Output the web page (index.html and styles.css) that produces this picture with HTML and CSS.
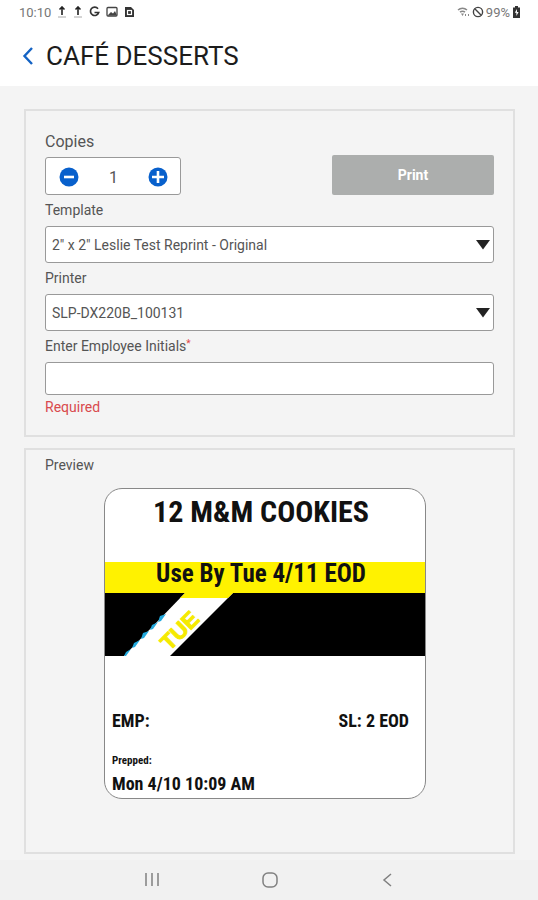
FILE: index.html
```
<!DOCTYPE html>
<html lang="en">
<head>
    <meta charset="UTF-8">
    <meta name="viewport" content="width=device-width, initial-scale=1.0">
    <title>Café Desserts</title>
    <link rel="stylesheet" href="styles.css">
</head>
<body>
    <div class="status-bar">
        <div class="status-group">
            <span class="status-time">10:10</span>
            <svg width="10" height="12" viewBox="0 0 10 12"><path d="M5 1v8M2.500 3.500L5 1l2.500 2.500" fill="none" stroke="#222" stroke-width="1.600"/><path d="M1 11h8" stroke="#aaa"/></svg>
            <svg width="10" height="12" viewBox="0 0 10 12"><path d="M5 1v8M2.500 3.500L5 1l2.500 2.500" fill="none" stroke="#222" stroke-width="1.600"/><path d="M1 11h8" stroke="#aaa"/></svg>
            <svg width="11" height="12" viewBox="0 0 11 12"><path d="M9 2.700A4.200 4.200 0 1 0 9.700 6.500H5.500" fill="none" stroke="#333" stroke-width="1.700"/></svg>
            <svg width="12" height="12" viewBox="0 0 12 12"><rect x="1" y="1.500" width="10" height="8.500" rx="1" fill="none" stroke="#444" stroke-width="1.300"/><path d="M2 9l3-3 2 1.500L9 5l2 4.500H2z" fill="#444"/></svg>
            <svg width="11" height="12" viewBox="0 0 11 12"><path d="M1 1h6l3 3v7H1z" fill="#333"/><rect x="3.500" y="4.500" width="4" height="4" fill="none" stroke="#fff" stroke-width="1.200"/></svg>
        </div>
        <div class="status-group status-right">
            <svg width="13" height="12" viewBox="0 0 13 12"><path d="M1 4a7 7 0 0 1 9 0M3 6.200a4 4 0 0 1 5 0" fill="none" stroke="#888" stroke-width="1.500"/><path d="M4 7.500h3L5.500 10zM8 8h1v2H8zM11 8h1v2h-1z" fill="#888"/></svg>
            <svg width="12" height="12" viewBox="0 0 12 12"><circle cx="6" cy="6" r="4.600" fill="none" stroke="#444" stroke-width="1.400"/><path d="M2.800 2.800l6.400 6.400" stroke="#444" stroke-width="1.400"/></svg>
            <span class="status-battery">99%</span>
            <svg width="9" height="12" viewBox="0 0 9 12"><path d="M3 0h3v1.500h2V12H1V1.500h2z" fill="#333"/><path d="M5 3L2.800 6.800h1.600V10l2.200-4H5z" fill="#fff"/></svg>
        </div>
    </div>

    <header class="header">
        <button class="back" aria-label="Back">
            <svg width="12" height="20" viewBox="0 0 12 20"><path d="M10 2L2.500 10l7.500 8" fill="none" stroke="#1463c4" stroke-width="2.400"/></svg>
        </button>
        <h1>CAFÉ DESSERTS</h1>
    </header>

    <main class="content">
        <form class="card form-card">
            <div class="top-row">
                <div>
                    <label class="field-label copies-label" for="copies">Copies</label>
                    <div class="stepper">
                        <button type="button" class="step" aria-label="Fewer copies">
                            <svg width="20" height="20" viewBox="0 0 20 20"><circle cx="10" cy="10" r="9.500" fill="#0860cc"/><path d="M5 10h10" stroke="#fff" stroke-width="2.600"/></svg>
                        </button>
                        <input type="text" id="copies" class="copies-input" value="1">
                        <button type="button" class="step" aria-label="More copies">
                            <svg width="20" height="20" viewBox="0 0 20 20"><circle cx="10" cy="10" r="9.500" fill="#0860cc"/><path d="M4 10h12M10 4v12" stroke="#fff" stroke-width="2.600"/></svg>
                        </button>
                    </div>
                </div>
                <button type="button" class="print">Print</button>
            </div>

            <label class="field-label" for="template">Template</label>
            <div class="select-box">
                <select id="template" class="field">
                    <option>2" x 2" Leslie Test Reprint - Original</option>
                </select>
                <svg class="arrow" width="14" height="10" viewBox="0 0 14 10"><path d="M0 0h14L7 9.500z" fill="#222"/></svg>
            </div>

            <label class="field-label" for="printer">Printer</label>
            <div class="select-box">
                <select id="printer" class="field">
                    <option>SLP-DX220B_100131</option>
                </select>
                <svg class="arrow" width="14" height="10" viewBox="0 0 14 10"><path d="M0 0h14L7 9.500z" fill="#222"/></svg>
            </div>

            <label class="field-label" for="initials">Enter Employee Initials<span class="star">*</span></label>
            <input type="text" id="initials" class="field initials">
            <p class="error">Required</p>
        </form>

        <section class="card preview-card">
            <h2 class="field-label">Preview</h2>
            <div class="sticker">
                <div class="sticker-title">12 M&amp;M COOKIES</div>
                <div class="use-by">Use By Tue 4/11 EOD</div>
                <div class="day-band">
                    <svg class="day-stripe" width="140" height="63" viewBox="0 0 140 63">
                        <path d="M80 0h48L65 63H19z" fill="#fff"/>
                        <path d="M80 0h48l-5 5H75z" fill="#fff200"/>
                        <path d="M61 21l-6 2-2 6 3-1zM53 29l-6 3-2 5 3-1zM44 38l-6 2-2 6 3-1zM35 47l-6 3-2 5 3-1zM26 56l-5 3-2 4h2z" fill="#22a9dd"/>
                        <text class="day-text" x="80" y="43" text-anchor="middle" transform="rotate(-45 80 43)">TUE</text>
                    </svg>
                </div>
                <div class="sticker-info">
                    <div class="info-row">
                        <span>EMP:</span>
                        <span>SL: 2 EOD</span>
                    </div>
                    <div class="prepped">Prepped:</div>
                    <div class="prepped-time">Mon 4/10 10:09 AM</div>
                </div>
            </div>
        </section>
    </main>

    <nav class="nav-bar">
        <button aria-label="Recent apps">
            <svg width="16" height="16" viewBox="0 0 16 16"><path d="M2 1v13M8 1v13M14 1v13" stroke="#808080" stroke-width="1.500"/></svg>
        </button>
        <button aria-label="Home">
            <svg width="16" height="16" viewBox="0 0 16 16"><rect x="1" y="1" width="14" height="14" rx="5" fill="none" stroke="#808080" stroke-width="1.500"/></svg>
        </button>
        <button aria-label="Back">
            <svg width="16" height="16" viewBox="0 0 16 16"><path d="M11 2L4 8l7 6" fill="none" stroke="#808080" stroke-width="1.500"/></svg>
        </button>
    </nav>
</body>
</html>
```
FILE: styles.css
```
* {
    box-sizing: border-box;
}

body {
    margin: 0;
    min-height: 100vh;
    display: flex;
    flex-direction: column;
    font-family: Roboto, "Liberation Sans", sans-serif;
    font-size: 14px;
    color: #555;
    background-color: #f4f4f4;
}

button {
    border: none;
    background: none;
    padding: 0;
    font-family: inherit;
    cursor: pointer;
}

svg {
    display: block;
}

/* Status bar */
.status-bar {
    display: flex;
    justify-content: space-between;
    height: 24px;
    padding: 0 17px 0 19px;
    background-color: #fff;
    color: #777;
    font-size: 13px;
}

.status-group {
    display: flex;
    align-items: center;
    gap: 6px;
}

.status-right {
    gap: 2px;
}

/* Header */
.header {
    display: flex;
    align-items: center;
    gap: 12px;
    height: 62px;
    padding: 2px 22px 0;
    background-color: #fff;
}

h1 {
    margin: 0;
    font-size: 26px;
    font-weight: 400;
    line-height: 32px;
    color: #1c1c1c;
}

/* Cards */
.content {
    flex: 1;
    display: flex;
    flex-direction: column;
    gap: 11px;
    padding: 23px 23px 6px 24px;
}

.card {
    border: 2px solid #e0e0e0;
    padding: 0 19px;
}

.form-card {
    padding-top: 16px;
    padding-bottom: 16px;
}

.top-row {
    display: flex;
    justify-content: space-between;
    align-items: flex-end;
}

.field-label {
    display: block;
    margin: 0;
    font-size: 14px;
    font-weight: 400;
    line-height: 31px;
    color: #555;
}

.copies-label {
    font-size: 16px;
    line-height: 30px;
}

.stepper {
    display: flex;
    align-items: center;
    justify-content: space-between;
    width: 136px;
    height: 38px;
    padding: 2px 12px 0 13px;
    border: 1px solid #999;
    border-radius: 3px;
    background-color: #fff;
}

.copies-input {
    width: 40px;
    border: none;
    padding: 0;
    text-align: center;
    font-family: inherit;
    font-size: 16px;
    color: #555;
}

.print {
    width: 162px;
    height: 40px;
    border-radius: 2px;
    background-color: #acaead;
    color: #fff;
    font-size: 14px;
    font-weight: 700;
}

.select-box {
    position: relative;
}

.field {
    display: block;
    width: 100%;
    height: 37px;
    padding: 0 6px;
    border: 1px solid #999;
    border-radius: 3px;
    background-color: #fff;
    font-family: inherit;
    font-size: 14px;
    color: #555;
    appearance: none;
}

.arrow {
    position: absolute;
    right: 4px;
    top: 14px;
    pointer-events: none;
}

.initials {
    height: 33px;
}

.star {
    color: #e04848;
    font-size: 10px;
    line-height: 10px;
    vertical-align: 4px;
}

.error {
    margin: 0;
    line-height: 24px;
    color: #d94a4d;
}

/* Sticker preview */
.preview-card {
    padding-bottom: 53px;
}

.sticker {
    max-width: 322px;
    margin: 7px 0 0 59px;
    border: 1px solid #888;
    border-radius: 18px;
    overflow: hidden;
    background-color: #fff;
    color: #111;
    font-family: "Liberation Sans Narrow", "Roboto Condensed", "Liberation Sans", sans-serif;
    font-weight: 700;
}

.sticker-title,
.use-by {
    padding-right: 8px;
    text-align: center;
}

.sticker-title {
    height: 73px;
    font-size: 30px;
    line-height: 46px;
}

.use-by {
    height: 31px;
    background-color: #fff200;
    font-size: 25px;
    line-height: 24px;
}

.day-band {
    height: 63px;
    background-color: #000;
}

.day-stripe {
    overflow: visible;
}

.day-text {
    fill: #f5ea00;
    stroke: #f5ea00;
    stroke-width: 1px;
    font-family: "Liberation Sans", sans-serif;
    font-size: 22px;
    font-weight: 700;
}

.sticker-info {
    padding: 53px 16px 2px 7px;
    font-size: 18px;
    line-height: 24px;
}

.info-row {
    display: flex;
    justify-content: space-between;
}

.prepped {
    margin-top: 20px;
    font-size: 11px;
    line-height: 16px;
}

.prepped-time {
    margin-top: 3px;
}

/* Navigation bar */
.nav-bar {
    display: flex;
    justify-content: center;
    gap: 102px;
    height: 40px;
    padding-left: 2px;
    background-color: #f1f1f1;
}
```
